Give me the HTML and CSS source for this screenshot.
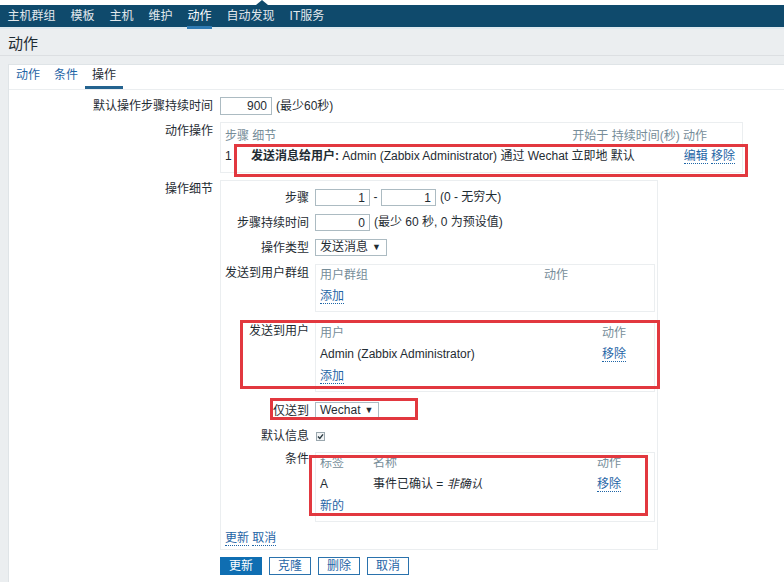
FILE: index.html
```html
<!DOCTYPE html>
<html>
<head>
	<meta charset="utf-8"/>
	<title>动作</title>
	<link rel="stylesheet" href="styles.css">
</head>
<body>
<div class="page">
	<div class="top-strip"><span class="pointer"></span></div>
	<nav class="menu">
		<a>主机群组</a><a>模板</a><a>主机</a><a>维护</a><a class="active">动作</a><a>自动发现</a><a>IT服务</a>
	</nav>
	<header class="title-bar"><h1>动作</h1></header>

	<main class="card">
		<div class="tabs">
			<a>动作</a><a>条件</a><a class="active">操作</a>
		</div>

		<div class="form">
			<label>默认操作步骤持续时间</label>
			<div class="field">
				<input class="num w52" type="text" value="900"><span class="hint">(最少60秒)</span>
			</div>

			<label>动作操作</label>
			<div class="ops">
				<div class="ops-head">
					<span>步骤 细节</span>
					<span class="ops-head-right">开始于 持续时间(秒) 动作</span>
				</div>
				<div class="ops-row">
					<span class="step">1</span>
					<span class="ops-desc"><b>发送消息给用户:</b> Admin (Zabbix Administrator) 通过 Wechat 立即地 默认</span>
					<span class="ops-links"><a class="link">编辑</a> <a class="link">移除</a></span>
				</div>
			</div>

			<label>操作细节</label>
			<div class="details">
				<label>步骤</label>
				<div class="field">
					<input class="num w55" type="text" value="1"><span class="sep">-</span><input class="num w55" type="text" value="1"><span class="hint">(0 - 无穷大)</span>
				</div>

				<label>步骤持续时间</label>
				<div class="field">
					<input class="num w55" type="text" value="0"><span class="hint">(最少 60 秒, 0 为预设值)</span>
				</div>

				<label>操作类型</label>
				<div class="field">
					<span class="select w72">发送消息<i>▼</i></span>
				</div>

				<label>发送到用户群组</label>
				<div class="sub sub-group space-after">
					<span class="th">用户群组</span><span class="th">动作</span>
					<span class="td"><a class="link">添加</a></span>
				</div>

				<label>发送到用户</label>
				<div class="sub sub-users space-after">
					<span class="th">用户</span><span class="th">动作</span>
					<span class="td">Admin (Zabbix Administrator)</span><span class="td"><a class="link">移除</a></span>
					<span class="td"><a class="link">添加</a></span>
				</div>

				<label>仅送到</label>
				<div class="field">
					<span class="select w64">Wechat<i>▼</i></span>
				</div>

				<label>默认信息</label>
				<div class="field tall">
					<span class="checkbox"><svg width="7" height="7" viewBox="0 0 7 7"><path d="M1 3.6 L2.8 5.4 L6 1.4" fill="none" stroke="#2b3a42" stroke-width="1.4"/></svg></span>
				</div>

				<label class="cond-label">条件</label>
				<div class="sub sub-cond">
					<span class="th">标签</span><span class="th">名称</span><span class="th">动作</span>
					<span class="td">A</span><span class="td">事件已确认 = <em>非确认</em></span><span class="td"><a class="link">移除</a></span>
					<span class="td"><a class="link">新的</a></span>
				</div>

				<div class="detail-links"><a class="link">更新</a> <a class="link">取消</a></div>
			</div>

			<span></span>
			<div class="buttons">
				<button class="btn primary">更新</button>
				<button class="btn">克隆</button>
				<button class="btn">删除</button>
				<button class="btn">取消</button>
			</div>
		</div>
	</main>

	<!-- red annotation boxes drawn over the screenshot -->
	<div class="mark mark-ops"></div>
	<div class="mark mark-users"></div>
	<div class="mark mark-only"></div>
	<div class="mark mark-cond"></div>
</div>
</body>
</html>
```

FILE: styles.css
```css
html, body { margin:0; padding:0; }
body {
	background:#ebeef0;
	color:#1f2c33;
	font-family:"Liberation Sans", "Noto Sans CJK SC", sans-serif;
	font-size:12px;
	line-height:17px;
}
a { cursor:pointer; }
.page {
	position:relative;
	width:784px;
	height:582px;
	overflow:hidden;
}

/* top menu */
.top-strip {
	position:relative;
	height:5px;
	background:#fff;
}
.pointer {
	position:absolute;
	left:256px;
	top:0;
	border-left:6px solid transparent;
	border-right:6px solid transparent;
	border-bottom:5px solid #0f4a6c;
}
.menu {
	display:flex;
	height:22px;
	background:#0f4a6c;
}
.menu a {
	position:relative;
	padding:0 7.5px;
	line-height:22px;
	color:#e2e8ec;
}
.menu a.active { color:#fff; }
.menu a.active::after {
	content:"";
	position:absolute;
	left:7px;
	right:7px;
	bottom:-2px;
	height:3px;
	background:#2f7bb4;
}

.title-bar {
	box-sizing:border-box;
	height:29px;
	padding:2px 0 0 8px;
	border-top:2px solid #dfe9ef;
	border-bottom:1px solid #dcdfe2;
	display:flex;
	align-items:center;
}
.title-bar h1 {
	margin:0;
	font-size:15px;
	font-weight:normal;
	color:#1f2c33;
}

/* main card */
.card {
	margin:8px 0 0 8px;
	height:517px;
	background:#fff;
	border:1px solid #dfe4e7;
	border-right:0;
}
.tabs {
	display:flex;
	height:24px;
	border-bottom:1px solid #ebeef0;
}
.tabs a {
	padding:0 7px;
	line-height:21px;
	border-bottom:3px solid transparent;
	color:#1f65a6;
}
.tabs a.active {
	color:#1f2c33;
	border-bottom-color:#24638f;
}

.form {
	display:grid;
	grid-template-columns:204px 1fr;
	column-gap:7px;
	row-gap:7px;
	padding-top:7px;
}
.form label, .details label {
	text-align:right;
	line-height:18px;
	white-space:nowrap;
}
.details .cond-label { margin-top:-2px; }
.field {
	display:flex;
	align-items:center;
	height:17px;
}
.form > .field { height:18px; }
.field.tall { height:18px; }

.num {
	box-sizing:border-box;
	height:100%;
	margin:0;
	padding:0 4px;
	border:1px solid #acbbc2;
	font:inherit;
	color:#1f2c33;
	text-align:right;
}
.w52 { width:52px; }
.w55 { width:55px; }
.w64 { width:64px; }
.w72 { width:72px; }
.hint { margin-left:4px; white-space:nowrap; }
.sep { margin:0 3.5px; }

.select {
	box-sizing:border-box;
	height:17px;
	display:flex;
	align-items:center;
	padding:0 3px 0 4px;
	border:1px solid #acbbc2;
	line-height:15px;
	white-space:nowrap;
	overflow:hidden;
}
.select i {
	font-style:normal;
	font-size:9px;
	margin-left:4px;
}

.checkbox {
	box-sizing:border-box;
	width:9px;
	height:9px;
	margin-left:1px;
	border:1px solid #9aa7ae;
	background:#f2f4f5;
	display:flex;
	align-items:center;
	justify-content:center;
}

.link {
	color:#1f65a6;
	border-bottom:1px dotted #1f65a6;
}

/* action operations table */
.ops {
	box-sizing:border-box;
	width:523px;
	padding:4px 0 5px 4px;
	border:1px solid #ebeef0;
}
.ops-head {
	display:flex;
	justify-content:space-between;
	line-height:18px;
	color:#768d99;
}
.ops-head-right { padding-right:35px; }
.ops-row {
	display:flex;
	line-height:22px;
}
.step { width:26px; }
.ops-desc { flex:1; }
.ops-desc b { font-weight:bold; }
.ops-links { padding-right:7px; }

/* operation details */
.details {
	box-sizing:border-box;
	width:438px;
	display:grid;
	grid-template-columns:88px 1fr;
	column-gap:6px;
	row-gap:7px;
	padding:8px 0 2px 0;
	border:1px solid #ebeef0;
}
.sub {
	display:grid;
	margin-right:2px;
	padding:0 5px 4px 4px;
	border:1px solid #ebeef0;
}
.sub .th { line-height:20px; color:#768d99; }
.sub .td { line-height:22px; }
.sub-group { grid-template-columns:224px 1fr; }
.sub-users { grid-template-columns:282px 1fr; }
.sub-cond { grid-template-columns:53px 224px 1fr; }
.sub em { font-style:italic; }
.space-after { margin-bottom:3px; }
.detail-links {
	grid-column:1 / -1;
	padding-left:4px;
	line-height:18px;
}

.buttons {
	display:flex;
	gap:7px;
}
.btn {
	box-sizing:border-box;
	width:42px;
	height:18px;
	padding:0;
	border:1px solid #2a72ad;
	background:#fff;
	color:#1f65a6;
	font:inherit;
	line-height:16px;
}
.btn.primary {
	background:#0f6eb2;
	border-color:#0f6eb2;
	color:#fff;
}

/* red annotation boxes */
.mark {
	position:absolute;
	box-sizing:border-box;
	border:3px solid #e2383f;
}
.mark-ops { left:234px; top:144px; width:514px; height:33px; }
.mark-users { left:240px; top:320px; width:420px; height:69px; }
.mark-only { left:270px; top:398px; width:148px; height:22px; }
.mark-cond { left:309px; top:455px; width:339px; height:61px; }
```
